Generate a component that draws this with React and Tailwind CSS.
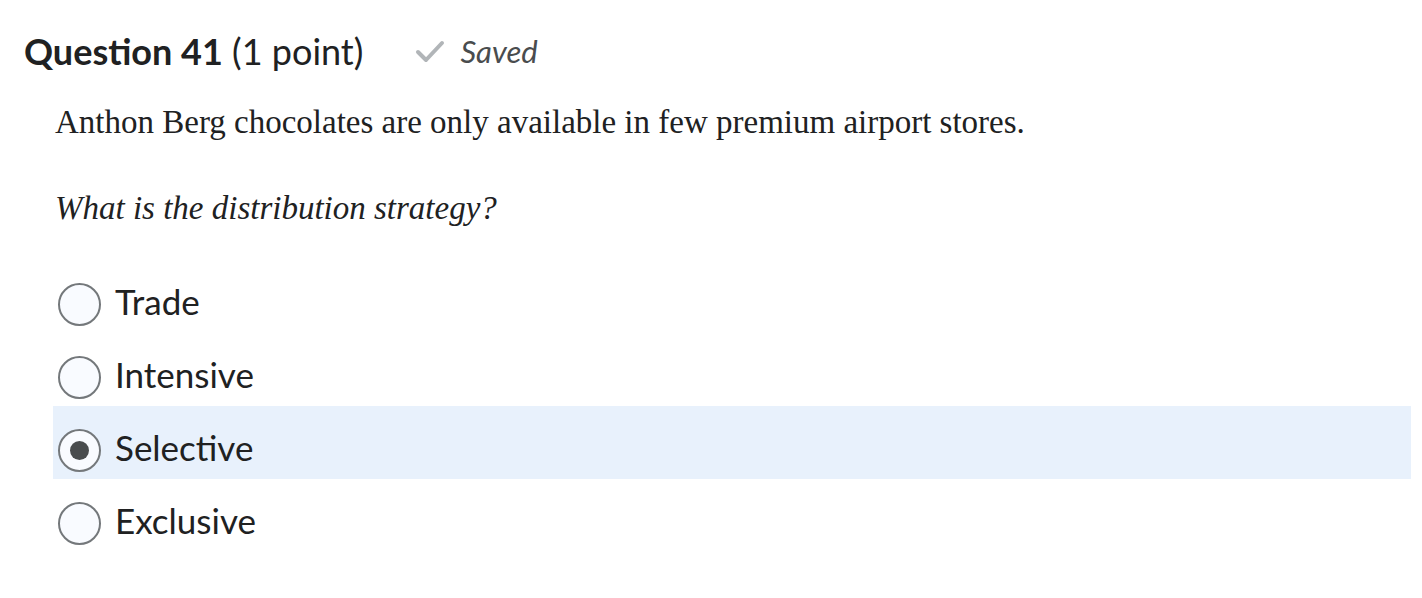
import React, { useState } from 'react';

const options = ['Trade', 'Intensive', 'Selective', 'Exclusive'];

function Radio({ checked }) {
    return (
        <span className="flex h-[43px] w-[43px] shrink-0 items-center justify-center rounded-full border-2 border-[#74787b] bg-[#f9fbff]">
            {checked && <span className="h-[19px] w-[19px] rounded-full bg-[#494c4e]" />}
        </span>
    );
}

export default function App() {
    const [selected, setSelected] = useState('Selective');

    return (
        <div className="min-h-screen bg-white font-['Lato',sans-serif] text-[#202122]">
            <div className="flex items-center pl-[24px] pt-[28px]">
                <h2 className="text-[36px] leading-[44px]">
                    <span className="font-bold">Question 41</span>{' '}
                    <span className="font-normal">(1 point)</span>
                </h2>
                <div className="ml-[52px] flex items-center gap-[15px]">
                    <svg width="30" height="24" viewBox="0 0 30 24" fill="none">
                        <path d="M3 13 L11 21 L27 4" stroke="#b1b5b8" strokeWidth="4" strokeLinecap="round" strokeLinejoin="round" />
                    </svg>
                    <span className="text-[31px] italic text-[#494c4e]">Saved</span>
                </div>
            </div>

            <div className="pl-[55px] pt-[25px] font-['Liberation_Serif',serif] text-[33px] text-[#202122]">
                <p className="leading-[44px]">Anthon Berg chocolates are only available in few premium airport stores.</p>
                <p className="mt-[42px] italic leading-[44px]">What is the distribution strategy?</p>
            </div>

            <div className="mt-[30px] pr-[11px]">
                {options.map(opt => (
                    <label
                        key={opt}
                        onClick={() => setSelected(opt)}
                        className={`ml-[53px] flex h-[73px] cursor-pointer items-center gap-[14px] pl-[5px] pt-[17px] ${selected === opt ? 'bg-[#e8f1fc]' : ''}`}
                    >
                        <Radio checked={selected === opt} />
                        <span className="-mt-[6px] text-[35px] leading-none">{opt}</span>
                    </label>
                ))}
            </div>
        </div>
    );
}
